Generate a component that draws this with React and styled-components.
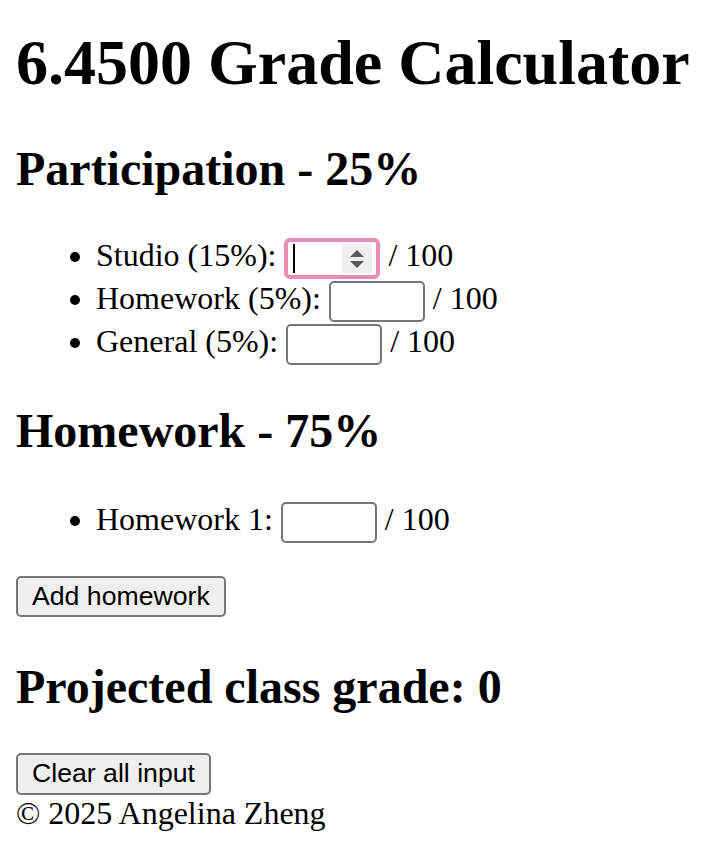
import React from "react";
import styled, { createGlobalStyle } from "styled-components";

const GlobalStyle = createGlobalStyle`
    html, body {
        margin: 0;
        padding: 0;
        background: #fff;
    }
    body {
        font-family: "Liberation Serif", "Times New Roman", serif;
        font-size: 32px;
        color: #000;
    }
`;

const Page = styled.div`
    display: flex;
    flex-direction: column;
    align-items: flex-start;
    padding: 0 16px;
`;

const Title = styled.h1`
    margin: 25.6px 0 0;
    font-size: 64px;
    font-weight: bold;
`;

const Heading = styled.h2`
    margin: ${(props) => props.$top}px 0 0;
    font-size: 48px;
    font-weight: bold;
`;

const List = styled.ul`
    margin: ${(props) => props.$top}px 0 0;
    padding-left: 80px;
`;

const Item = styled.li`
    min-height: 43px;
`;

const Field = styled.input`
    box-sizing: border-box;
    width: 96px;
    height: 41px;
    padding: 2px 6px;
    border: 2px solid #767676;
    border-radius: 5px;
    background: #fff;
    font: 26.67px "Liberation Sans", Arial, sans-serif;
    vertical-align: middle;
    outline: none;
`;

const FocusedField = styled.span`
    box-sizing: border-box;
    display: inline-flex;
    align-items: center;
    justify-content: space-between;
    width: 96px;
    height: 41.4px;
    padding: 0 4px 0 5px;
    border: 4px solid #e88db4;
    border-radius: 6px;
    background: #fff;
    vertical-align: middle;
`;

const Caret = styled.span`
    width: 2px;
    height: 29px;
    background: #000;
`;

const Spinner = styled.span`
    display: flex;
    align-items: center;
    justify-content: center;
    width: 30px;
    height: 29px;
    background: #efefef;
`;

const Button = styled.button`
    box-sizing: border-box;
    margin: ${(props) => props.$top}px 0 0;
    height: 41.5px;
    padding: 0 14px;
    border: 2px solid #767676;
    border-radius: 5px;
    background: #efefef;
    color: #000;
    font: 26.67px "Liberation Sans", Arial, sans-serif;
`;

const Footer = styled.div`
    margin: 0;
`;

const SpinArrows = () => (
    <svg width="16" height="22" viewBox="0 0 16 22">
        <path d="M8 2 L15 9 L1 9 Z" fill="#5a5a5a" />
        <path d="M1 13 L15 13 L8 20 Z" fill="#5a5a5a" />
    </svg>
);

const App = () => {
    return (
        <>
            <GlobalStyle />
            <Page>
                <Title>6.4500 Grade Calculator</Title>
                <Heading $top={41}>Participation - 25%</Heading>
                <List $top={41.4}>
                    <Item>
                        Studio (15%):{" "}
                        <FocusedField>
                            <Caret />
                            <Spinner>
                                <SpinArrows />
                            </Spinner>
                        </FocusedField>{" "}
                        / 100
                    </Item>
                    <Item>
                        Homework (5%): <Field type="text" /> / 100
                    </Item>
                    <Item>
                        General (5%): <Field type="text" /> / 100
                    </Item>
                </List>
                <Heading $top={37.4}>Homework - 75%</Heading>
                <List $top={42.4}>
                    <Item>
                        Homework 1: <Field type="text" /> / 100
                    </Item>
                </List>
                <Button $top={32.2}>Add homework</Button>
                <Heading $top={41.2}>Projected class grade: 0</Heading>
                <Button $top={39.6}>Clear all input</Button>
                <Footer>© 2025 Angelina Zheng</Footer>
            </Page>
        </>
    );
};

export default App;
